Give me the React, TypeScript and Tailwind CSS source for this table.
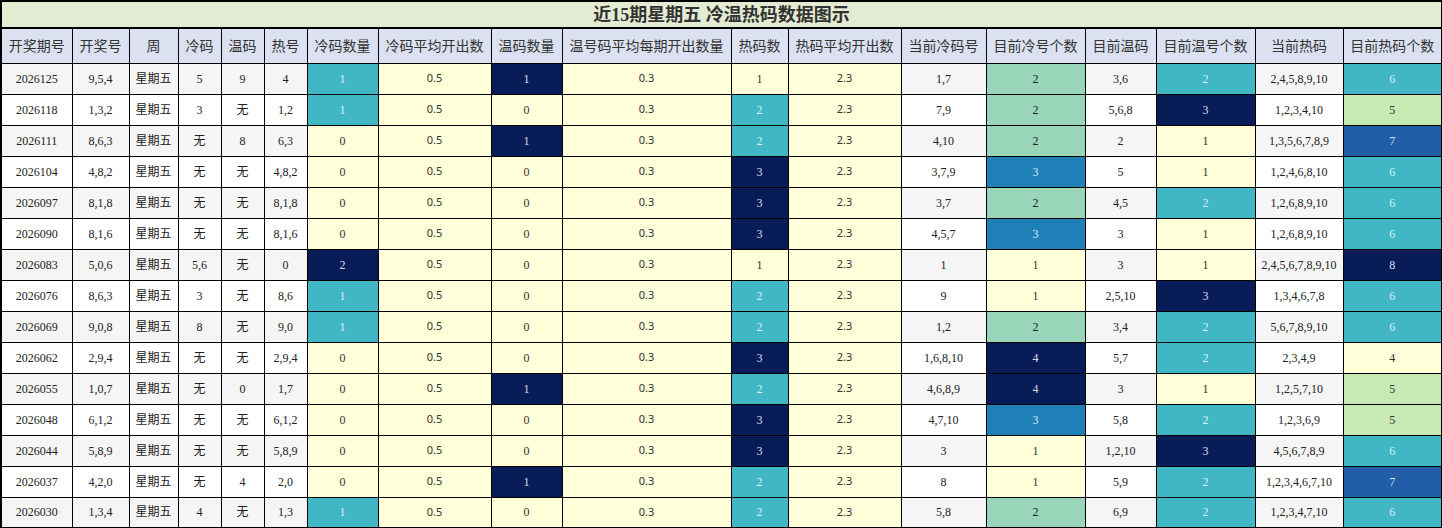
import React from 'react';

type Cell = string | [string, string];

const headers = [
  '开奖期号', '开奖号', '周', '冷码', '温码', '热号', '冷码数量', '冷码平均开出数', '温码数量',
  '温号码平均每期开出数量', '热码数', '热码平均开出数', '当前冷码号', '目前冷号个数', '目前温码',
  '目前温号个数', '当前热码', '目前热码个数',
];

const colWidths = [
  'w-[71px]', 'w-[57px]', 'w-[49px]', 'w-[43px]', 'w-[43px]', 'w-[43px]', 'w-[71px]', 'w-[113px]', 'w-[71px]',
  'w-[169px]', 'w-[57px]', 'w-[113px]', 'w-[85px]', 'w-[99px]', 'w-[71px]', 'w-[99px]', 'w-[88px]', 'w-[99px]',
];

// y yellow, t teal, n navy, m mint, g light green, b blue, B deep blue
const tone: Record<string, string> = {
  y: 'bg-[#ffffd9] text-[#333]',
  t: 'bg-[#41b6c4] text-[#dff1f3]',
  n: 'bg-[#081d58] text-[#d9dde8]',
  m: 'bg-[#99d5b9] text-[#222]',
  g: 'bg-[#c7e9b4] text-[#333]',
  b: 'bg-[#1f80b8] text-[#d6e8f3]',
  B: 'bg-[#225ea8] text-[#d8e2f0]',
};

const rows: Cell[][] = [
  ['2026125', '9,5,4', '星期五', '5', '9', '4', ['1', 't'], ['0.5', 'y'], ['1', 'n'], ['0.3', 'y'], ['1', 'y'], ['2.3', 'y'], '1,7', ['2', 'm'], '3,6', ['2', 't'], '2,4,5,8,9,10', ['6', 't']],
  ['2026118', '1,3,2', '星期五', '3', '无', '1,2', ['1', 't'], ['0.5', 'y'], ['0', 'y'], ['0.3', 'y'], ['2', 't'], ['2.3', 'y'], '7,9', ['2', 'm'], '5,6,8', ['3', 'n'], '1,2,3,4,10', ['5', 'g']],
  ['2026111', '8,6,3', '星期五', '无', '8', '6,3', ['0', 'y'], ['0.5', 'y'], ['1', 'n'], ['0.3', 'y'], ['2', 't'], ['2.3', 'y'], '4,10', ['2', 'm'], '2', ['1', 'y'], '1,3,5,6,7,8,9', ['7', 'B']],
  ['2026104', '4,8,2', '星期五', '无', '无', '4,8,2', ['0', 'y'], ['0.5', 'y'], ['0', 'y'], ['0.3', 'y'], ['3', 'n'], ['2.3', 'y'], '3,7,9', ['3', 'b'], '5', ['1', 'y'], '1,2,4,6,8,10', ['6', 't']],
  ['2026097', '8,1,8', '星期五', '无', '无', '8,1,8', ['0', 'y'], ['0.5', 'y'], ['0', 'y'], ['0.3', 'y'], ['3', 'n'], ['2.3', 'y'], '3,7', ['2', 'm'], '4,5', ['2', 't'], '1,2,6,8,9,10', ['6', 't']],
  ['2026090', '8,1,6', '星期五', '无', '无', '8,1,6', ['0', 'y'], ['0.5', 'y'], ['0', 'y'], ['0.3', 'y'], ['3', 'n'], ['2.3', 'y'], '4,5,7', ['3', 'b'], '3', ['1', 'y'], '1,2,6,8,9,10', ['6', 't']],
  ['2026083', '5,0,6', '星期五', '5,6', '无', '0', ['2', 'n'], ['0.5', 'y'], ['0', 'y'], ['0.3', 'y'], ['1', 'y'], ['2.3', 'y'], '1', ['1', 'y'], '3', ['1', 'y'], '2,4,5,6,7,8,9,10', ['8', 'n']],
  ['2026076', '8,6,3', '星期五', '3', '无', '8,6', ['1', 't'], ['0.5', 'y'], ['0', 'y'], ['0.3', 'y'], ['2', 't'], ['2.3', 'y'], '9', ['1', 'y'], '2,5,10', ['3', 'n'], '1,3,4,6,7,8', ['6', 't']],
  ['2026069', '9,0,8', '星期五', '8', '无', '9,0', ['1', 't'], ['0.5', 'y'], ['0', 'y'], ['0.3', 'y'], ['2', 't'], ['2.3', 'y'], '1,2', ['2', 'm'], '3,4', ['2', 't'], '5,6,7,8,9,10', ['6', 't']],
  ['2026062', '2,9,4', '星期五', '无', '无', '2,9,4', ['0', 'y'], ['0.5', 'y'], ['0', 'y'], ['0.3', 'y'], ['3', 'n'], ['2.3', 'y'], '1,6,8,10', ['4', 'n'], '5,7', ['2', 't'], '2,3,4,9', ['4', 'y']],
  ['2026055', '1,0,7', '星期五', '无', '0', '1,7', ['0', 'y'], ['0.5', 'y'], ['1', 'n'], ['0.3', 'y'], ['2', 't'], ['2.3', 'y'], '4,6,8,9', ['4', 'n'], '3', ['1', 'y'], '1,2,5,7,10', ['5', 'g']],
  ['2026048', '6,1,2', '星期五', '无', '无', '6,1,2', ['0', 'y'], ['0.5', 'y'], ['0', 'y'], ['0.3', 'y'], ['3', 'n'], ['2.3', 'y'], '4,7,10', ['3', 'b'], '5,8', ['2', 't'], '1,2,3,6,9', ['5', 'g']],
  ['2026044', '5,8,9', '星期五', '无', '无', '5,8,9', ['0', 'y'], ['0.5', 'y'], ['0', 'y'], ['0.3', 'y'], ['3', 'n'], ['2.3', 'y'], '3', ['1', 'y'], '1,2,10', ['3', 'n'], '4,5,6,7,8,9', ['6', 't']],
  ['2026037', '4,2,0', '星期五', '无', '4', '2,0', ['0', 'y'], ['0.5', 'y'], ['1', 'n'], ['0.3', 'y'], ['2', 't'], ['2.3', 'y'], '8', ['1', 'y'], '5,9', ['2', 't'], '1,2,3,4,6,7,10', ['7', 'B']],
  ['2026030', '1,3,4', '星期五', '4', '无', '1,3', ['1', 't'], ['0.5', 'y'], ['0', 'y'], ['0.3', 'y'], ['2', 't'], ['2.3', 'y'], '5,8', ['2', 'm'], '6,9', ['2', 't'], '1,2,3,4,7,10', ['6', 't']],
];

export default function App() {
  return (
    <div className="w-[1442px] h-[528px] bg-white">
      <table className="w-[1442px] table-fixed border-collapse border-2 border-black text-center font-['Liberation_Serif','Noto_Sans_CJK_SC',serif] text-[12px] text-[#222]">
        <colgroup>
          {colWidths.map((w, i) => (
            <col key={i} className={w} />
          ))}
        </colgroup>
        <thead>
          <tr className="h-[27px]">
            <th
              colSpan={18}
              className="border-b-2 border-black bg-[#e3ecd2] text-[18px] font-bold text-[#333] leading-none font-['Liberation_Serif','Noto_Sans_CJK_SC',serif]"
            >
              近15期星期五 冷温热码数据图示
            </th>
          </tr>
          <tr className="h-[35px]">
            {headers.map((h) => (
              <th
                key={h}
                className="border border-black bg-[#dbe1f1] px-0 text-[14px] font-normal text-[#333] whitespace-nowrap font-['Noto_Sans_CJK_SC',sans-serif]"
              >
                {h}
              </th>
            ))}
          </tr>
        </thead>
        <tbody>
          {rows.map((row, r) => (
            <tr key={r} className={`h-[31px] ${r % 2 === 0 ? 'bg-[#f5f5f5]' : 'bg-white'}`}>
              {row.map((c, i) => {
                const text = typeof c === 'string' ? c : c[0];
                const cls = typeof c === 'string' ? '' : tone[c[1]];
                // averages are set in a sans face in the source chart
                const face = text.includes('.') ? "font-['Noto_Sans',sans-serif] text-[11px]" : '';
                return (
                  <td key={i} className={`border border-black px-0 whitespace-nowrap ${cls} ${face}`}>
                    {text}
                  </td>
                );
              })}
            </tr>
          ))}
        </tbody>
      </table>
    </div>
  );
}
